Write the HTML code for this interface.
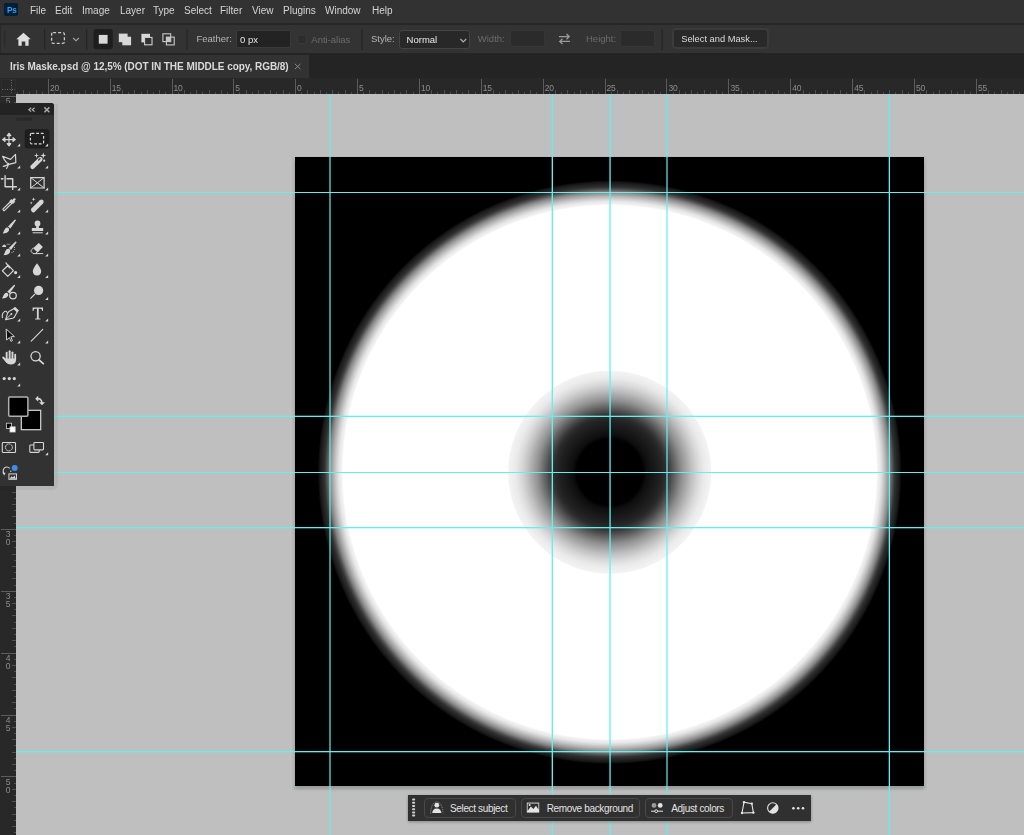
<!DOCTYPE html>
<html><head><meta charset="utf-8">
<style>
*{margin:0;padding:0;box-sizing:border-box}
html,body{width:1024px;height:835px;overflow:hidden;background:#bfbfbf;font-family:"Liberation Sans",sans-serif;position:relative}
.a{position:absolute}
svg{position:absolute;left:0;top:0;overflow:visible}
svg text{stroke:none}
.t{stroke:#505050}
#menubar{left:0;top:0;width:1024px;height:23px;background:#323232}
#sep1{left:0;top:23px;width:1024px;height:2px;background:#262626}
#opts{left:0;top:25px;width:1024px;height:28px;background:#333333;border-left:1px solid #2a2a2a}
#sep2{left:0;top:53px;width:1024px;height:2px;background:#242424}
#tabbar{left:0;top:54px;width:1024px;height:24px;background:#242424}
#tab{left:0;top:55px;width:309px;height:23px;background:#323232}
#rulert{left:0;top:78px;width:1024px;height:16px;background:#282828}
#rulerl{left:0;top:94px;width:16px;height:741px;background:#282828}
#canvas{left:295px;top:158px;width:629px;height:628px;background:#000;box-shadow:0 3px 3px 0px rgba(0,0,0,.17),0 1px 0 3px rgba(0,30,30,.035)}
.menu{position:absolute;top:4px;font-size:10px;color:#d4d4d4;line-height:13px;white-space:nowrap;will-change:transform}
.ot{position:absolute;font-size:9.5px;line-height:12px;color:#b4b4b4;white-space:nowrap}
.dim{color:#6c6c6c}
.sep{position:absolute;width:1px;background:#262626}
.box{position:absolute;background:#262626;border:1px solid #3a3a3a;border-radius:2px}
#tools{left:0;top:103px;width:54px;height:383px;background:#323232;border-top-right-radius:3px;}
#toolhdr{left:0;top:103px;width:54px;height:11.5px;background:#232323;border-top-right-radius:3px}
#task{left:408px;top:795px;width:403px;height:26px;background:#303030;box-shadow:0 1px 3px rgba(0,0,0,.3)}
.tb{position:absolute;top:798px;height:20px;border:1px solid #4a4a4a;border-radius:4px}
.tt{position:absolute;top:803px;font-size:10px;line-height:12px;color:#e2e2e2;white-space:nowrap;letter-spacing:-0.35px}
</style></head><body>
<div id="menubar" class="a"></div>
<div id="sep1" class="a"></div>
<div id="opts" class="a"></div>
<div id="sep2" class="a"></div>
<div id="tabbar" class="a"></div>
<div id="tab" class="a"></div>
<div id="rulert" class="a"></div>
<div id="rulerl" class="a"></div>

<!-- Ps logo -->
<div class="a" style="left:4px;top:3px;width:14px;height:13px;background:#001e36;border-radius:2px"></div>
<div class="a" style="left:6.5px;top:4.7px;font-size:8.2px;font-weight:bold;color:#2ea2f4;line-height:11px;letter-spacing:-0.1px;will-change:transform">Ps</div>

<!-- menu -->
<div class="menu" style="left:30px">File</div>
<div class="menu" style="left:55px">Edit</div>
<div class="menu" style="left:81.5px">Image</div>
<div class="menu" style="left:119.5px">Layer</div>
<div class="menu" style="left:152.5px">Type</div>
<div class="menu" style="left:183.5px">Select</div>
<div class="menu" style="left:219.5px">Filter</div>
<div class="menu" style="left:251.5px">View</div>
<div class="menu" style="left:283px">Plugins</div>
<div class="menu" style="left:324.5px">Window</div>
<div class="menu" style="left:371.5px">Help</div>

<!-- options bar -->
<svg width="1024" height="60">
 <g fill="#2a2a2a"><rect x="4" y="31" width="1.5" height="16"/></g>
 <g fill="#242424">
  <rect x="44" y="29" width="1.2" height="21"/>
  <rect x="86" y="29" width="1.2" height="21"/>
  <rect x="186.5" y="29" width="1.2" height="21"/>
  <rect x="361.5" y="29" width="1.2" height="21"/>
  <rect x="661.5" y="29" width="1.2" height="21"/>
 </g>
 <!-- home -->
 <path d="M23.5 32.8 L30.7 39.3 L28.6 39.3 L28.6 45.7 L25.3 45.7 L25.3 41.5 L21.7 41.5 L21.7 45.7 L18.4 45.7 L18.4 39.3 L16.3 39.3 Z" fill="#dedede"/>
 <!-- marquee -->
 <rect x="51.6" y="32.6" width="12.8" height="10.8" rx="1.5" fill="none" stroke="#c8c8c8" stroke-width="1.3" stroke-dasharray="3 2"/>
 <path d="M73.2 38 L76 40.8 L78.8 38" fill="none" stroke="#a8a8a8" stroke-width="1.1"/>
 <!-- selection modes -->
 <rect x="93.5" y="29" width="19.3" height="20.2" rx="3" fill="#1e1e1e"/>
 <rect x="98.8" y="34.9" width="8.8" height="8.8" fill="#d8d8d8"/>
 <rect x="118.8" y="33.6" width="8.8" height="8.6" fill="#d8d8d8"/>
 <rect x="122.3" y="36.7" width="8.8" height="8.6" fill="#d8d8d8"/>
 <rect x="141.4" y="33.8" width="8.6" height="8.6" fill="#d8d8d8"/>
 <rect x="144.6" y="37.4" width="7.4" height="7.4" fill="#323232" stroke="#d0d0d0" stroke-width="1.1"/>
 <rect x="162.9" y="33.8" width="7.8" height="7.8" fill="none" stroke="#c8c8c8" stroke-width="1.1"/>
 <rect x="166.4" y="37.1" width="7.8" height="7.8" fill="none" stroke="#c8c8c8" stroke-width="1.1"/>
 <rect x="166.4" y="37.1" width="4.3" height="4.5" fill="#c8c8c8"/>
 <!-- checkbox -->
 <rect x="297.5" y="35" width="8.5" height="8.5" rx="1.5" fill="#2c2c2c" stroke="#3a3a3a" stroke-width="1"/>
 <!-- swap -->
 <g fill="none" stroke="#9a9a9a" stroke-width="1.3">
  <path d="M559 36.6 H569 M566.5 34 L569.2 36.6 L566.5 39.2"/>
  <path d="M570 41.4 H560 M562.5 38.8 L559.8 41.4 L562.5 44"/>
 </g>
</svg>
<div class="ot" style="left:196.5px;top:33px">Feather:</div>
<div class="box" style="left:236px;top:29.6px;width:54.5px;height:18.2px;background:#232323"></div>
<div class="ot" style="left:240px;top:33.5px;color:#e4e4e4">0 px</div>
<div class="ot dim" style="left:311.3px;top:33.5px">Anti-alias</div>
<div class="ot" style="left:371px;top:33px">Style:</div>
<div class="box" style="left:399px;top:30.2px;width:71px;height:19.3px;border-radius:3px;background:#282828;border-color:#444"></div>
<div class="ot" style="left:406.6px;top:34px;color:#e8e8e8">Normal</div>
<svg width="1024" height="60"><path d="M460.4 39 L463.3 41.9 L466.2 39" fill="none" stroke="#b0b0b0" stroke-width="1.1"/></svg>
<div class="ot dim" style="left:477.8px;top:33px">Width:</div>
<div class="box" style="left:510.3px;top:29.6px;width:34.5px;height:17.8px;background:#2b2b2b;border-color:#363636"></div>
<div class="ot dim" style="left:586px;top:33px">Height:</div>
<div class="box" style="left:620.4px;top:29.6px;width:34.3px;height:17.8px;background:#2b2b2b;border-color:#363636"></div>
<div class="box" style="left:671.5px;top:27.5px;width:97px;height:21px;border-radius:4px;background:#292929;border:2px solid #3b3b3b"></div>
<div class="ot" style="left:681.2px;top:33px;color:#dcdcdc;font-size:9.3px">Select and Mask...</div>

<!-- tab -->
<div class="a" style="left:9.7px;top:60.5px;font-size:10px;font-weight:bold;line-height:12px;color:#dadada;white-space:nowrap;letter-spacing:-0.05px;will-change:transform">Iris Maske.psd @ 12,5% (DOT IN THE MIDDLE copy, RGB/8)</div>
<svg width="1024" height="80"><path d="M294.8 63.8 L300.5 69.2 M300.5 63.8 L294.8 69.2" stroke="#8e8e8e" stroke-width="0.9"/></svg>

<!-- rulers -->
<svg width="1024" height="835" style="font-size:8.5px;font-family:'Liberation Sans',sans-serif;will-change:transform">
 <g stroke="#5c5c5c" stroke-width="1" fill="#8c8c8c" style="letter-spacing:-0.2px">
<line x1="17.50" y1="92.2" x2="17.50" y2="94" class="t"/>
<line x1="23.50" y1="90.2" x2="23.50" y2="94" class="t"/>
<line x1="29.50" y1="92.2" x2="29.50" y2="94" class="t"/>
<line x1="36.50" y1="90.2" x2="36.50" y2="94" class="t"/>
<line x1="42.50" y1="92.2" x2="42.50" y2="94" class="t"/>
<line x1="48.50" y1="79" x2="48.50" y2="94" />
<text x="50.10" y="90.7">20</text>
<line x1="54.50" y1="92.2" x2="54.50" y2="94" class="t"/>
<line x1="60.50" y1="90.2" x2="60.50" y2="94" class="t"/>
<line x1="67.50" y1="92.2" x2="67.50" y2="94" class="t"/>
<line x1="73.50" y1="90.2" x2="73.50" y2="94" class="t"/>
<line x1="79.50" y1="92.2" x2="79.50" y2="94" class="t"/>
<line x1="85.50" y1="90.2" x2="85.50" y2="94" class="t"/>
<line x1="91.50" y1="92.2" x2="91.50" y2="94" class="t"/>
<line x1="97.50" y1="90.2" x2="97.50" y2="94" class="t"/>
<line x1="104.50" y1="92.2" x2="104.50" y2="94" class="t"/>
<line x1="110.50" y1="79" x2="110.50" y2="94" />
<text x="111.85" y="90.7">15</text>
<line x1="116.50" y1="92.2" x2="116.50" y2="94" class="t"/>
<line x1="122.50" y1="90.2" x2="122.50" y2="94" class="t"/>
<line x1="128.50" y1="92.2" x2="128.50" y2="94" class="t"/>
<line x1="134.50" y1="90.2" x2="134.50" y2="94" class="t"/>
<line x1="141.50" y1="92.2" x2="141.50" y2="94" class="t"/>
<line x1="147.50" y1="90.2" x2="147.50" y2="94" class="t"/>
<line x1="153.50" y1="92.2" x2="153.50" y2="94" class="t"/>
<line x1="159.50" y1="90.2" x2="159.50" y2="94" class="t"/>
<line x1="165.50" y1="92.2" x2="165.50" y2="94" class="t"/>
<line x1="172.50" y1="79" x2="172.50" y2="94" />
<text x="173.60" y="90.7">10</text>
<line x1="178.50" y1="92.2" x2="178.50" y2="94" class="t"/>
<line x1="184.50" y1="90.2" x2="184.50" y2="94" class="t"/>
<line x1="190.50" y1="92.2" x2="190.50" y2="94" class="t"/>
<line x1="196.50" y1="90.2" x2="196.50" y2="94" class="t"/>
<line x1="202.50" y1="92.2" x2="202.50" y2="94" class="t"/>
<line x1="209.50" y1="90.2" x2="209.50" y2="94" class="t"/>
<line x1="215.50" y1="92.2" x2="215.50" y2="94" class="t"/>
<line x1="221.50" y1="90.2" x2="221.50" y2="94" class="t"/>
<line x1="227.50" y1="92.2" x2="227.50" y2="94" class="t"/>
<line x1="233.50" y1="79" x2="233.50" y2="94" />
<text x="235.35" y="90.7">5</text>
<line x1="239.50" y1="92.2" x2="239.50" y2="94" class="t"/>
<line x1="246.50" y1="90.2" x2="246.50" y2="94" class="t"/>
<line x1="252.50" y1="92.2" x2="252.50" y2="94" class="t"/>
<line x1="258.50" y1="90.2" x2="258.50" y2="94" class="t"/>
<line x1="264.50" y1="92.2" x2="264.50" y2="94" class="t"/>
<line x1="270.50" y1="90.2" x2="270.50" y2="94" class="t"/>
<line x1="276.50" y1="92.2" x2="276.50" y2="94" class="t"/>
<line x1="283.50" y1="90.2" x2="283.50" y2="94" class="t"/>
<line x1="289.50" y1="92.2" x2="289.50" y2="94" class="t"/>
<line x1="295.50" y1="79" x2="295.50" y2="94" />
<text x="297.10" y="90.7">0</text>
<line x1="301.50" y1="92.2" x2="301.50" y2="94" class="t"/>
<line x1="307.50" y1="90.2" x2="307.50" y2="94" class="t"/>
<line x1="314.50" y1="92.2" x2="314.50" y2="94" class="t"/>
<line x1="320.50" y1="90.2" x2="320.50" y2="94" class="t"/>
<line x1="326.50" y1="92.2" x2="326.50" y2="94" class="t"/>
<line x1="332.50" y1="90.2" x2="332.50" y2="94" class="t"/>
<line x1="338.50" y1="92.2" x2="338.50" y2="94" class="t"/>
<line x1="345.50" y1="90.2" x2="345.50" y2="94" class="t"/>
<line x1="351.50" y1="92.2" x2="351.50" y2="94" class="t"/>
<line x1="357.50" y1="79" x2="357.50" y2="94" />
<text x="359.00" y="90.7">5</text>
<line x1="363.50" y1="92.2" x2="363.50" y2="94" class="t"/>
<line x1="369.50" y1="90.2" x2="369.50" y2="94" class="t"/>
<line x1="375.50" y1="92.2" x2="375.50" y2="94" class="t"/>
<line x1="382.50" y1="90.2" x2="382.50" y2="94" class="t"/>
<line x1="388.50" y1="92.2" x2="388.50" y2="94" class="t"/>
<line x1="394.50" y1="90.2" x2="394.50" y2="94" class="t"/>
<line x1="400.50" y1="92.2" x2="400.50" y2="94" class="t"/>
<line x1="406.50" y1="90.2" x2="406.50" y2="94" class="t"/>
<line x1="413.50" y1="92.2" x2="413.50" y2="94" class="t"/>
<line x1="419.50" y1="79" x2="419.50" y2="94" />
<text x="420.90" y="90.7">10</text>
<line x1="425.50" y1="92.2" x2="425.50" y2="94" class="t"/>
<line x1="431.50" y1="90.2" x2="431.50" y2="94" class="t"/>
<line x1="437.50" y1="92.2" x2="437.50" y2="94" class="t"/>
<line x1="444.50" y1="90.2" x2="444.50" y2="94" class="t"/>
<line x1="450.50" y1="92.2" x2="450.50" y2="94" class="t"/>
<line x1="456.50" y1="90.2" x2="456.50" y2="94" class="t"/>
<line x1="462.50" y1="92.2" x2="462.50" y2="94" class="t"/>
<line x1="468.50" y1="90.2" x2="468.50" y2="94" class="t"/>
<line x1="475.50" y1="92.2" x2="475.50" y2="94" class="t"/>
<line x1="481.50" y1="79" x2="481.50" y2="94" />
<text x="482.80" y="90.7">15</text>
<line x1="487.50" y1="92.2" x2="487.50" y2="94" class="t"/>
<line x1="493.50" y1="90.2" x2="493.50" y2="94" class="t"/>
<line x1="499.50" y1="92.2" x2="499.50" y2="94" class="t"/>
<line x1="505.50" y1="90.2" x2="505.50" y2="94" class="t"/>
<line x1="512.50" y1="92.2" x2="512.50" y2="94" class="t"/>
<line x1="518.50" y1="90.2" x2="518.50" y2="94" class="t"/>
<line x1="524.50" y1="92.2" x2="524.50" y2="94" class="t"/>
<line x1="530.50" y1="90.2" x2="530.50" y2="94" class="t"/>
<line x1="536.50" y1="92.2" x2="536.50" y2="94" class="t"/>
<line x1="543.50" y1="79" x2="543.50" y2="94" />
<text x="544.70" y="90.7">20</text>
<line x1="549.50" y1="92.2" x2="549.50" y2="94" class="t"/>
<line x1="555.50" y1="90.2" x2="555.50" y2="94" class="t"/>
<line x1="561.50" y1="92.2" x2="561.50" y2="94" class="t"/>
<line x1="567.50" y1="90.2" x2="567.50" y2="94" class="t"/>
<line x1="574.50" y1="92.2" x2="574.50" y2="94" class="t"/>
<line x1="580.50" y1="90.2" x2="580.50" y2="94" class="t"/>
<line x1="586.50" y1="92.2" x2="586.50" y2="94" class="t"/>
<line x1="592.50" y1="90.2" x2="592.50" y2="94" class="t"/>
<line x1="598.50" y1="92.2" x2="598.50" y2="94" class="t"/>
<line x1="605.50" y1="79" x2="605.50" y2="94" />
<text x="606.60" y="90.7">25</text>
<line x1="611.50" y1="92.2" x2="611.50" y2="94" class="t"/>
<line x1="617.50" y1="90.2" x2="617.50" y2="94" class="t"/>
<line x1="623.50" y1="92.2" x2="623.50" y2="94" class="t"/>
<line x1="629.50" y1="90.2" x2="629.50" y2="94" class="t"/>
<line x1="635.50" y1="92.2" x2="635.50" y2="94" class="t"/>
<line x1="642.50" y1="90.2" x2="642.50" y2="94" class="t"/>
<line x1="648.50" y1="92.2" x2="648.50" y2="94" class="t"/>
<line x1="654.50" y1="90.2" x2="654.50" y2="94" class="t"/>
<line x1="660.50" y1="92.2" x2="660.50" y2="94" class="t"/>
<line x1="666.50" y1="79" x2="666.50" y2="94" />
<text x="668.50" y="90.7">30</text>
<line x1="673.50" y1="92.2" x2="673.50" y2="94" class="t"/>
<line x1="679.50" y1="90.2" x2="679.50" y2="94" class="t"/>
<line x1="685.50" y1="92.2" x2="685.50" y2="94" class="t"/>
<line x1="691.50" y1="90.2" x2="691.50" y2="94" class="t"/>
<line x1="697.50" y1="92.2" x2="697.50" y2="94" class="t"/>
<line x1="704.50" y1="90.2" x2="704.50" y2="94" class="t"/>
<line x1="710.50" y1="92.2" x2="710.50" y2="94" class="t"/>
<line x1="716.50" y1="90.2" x2="716.50" y2="94" class="t"/>
<line x1="722.50" y1="92.2" x2="722.50" y2="94" class="t"/>
<line x1="728.50" y1="79" x2="728.50" y2="94" />
<text x="730.40" y="90.7">35</text>
<line x1="734.50" y1="92.2" x2="734.50" y2="94" class="t"/>
<line x1="741.50" y1="90.2" x2="741.50" y2="94" class="t"/>
<line x1="747.50" y1="92.2" x2="747.50" y2="94" class="t"/>
<line x1="753.50" y1="90.2" x2="753.50" y2="94" class="t"/>
<line x1="759.50" y1="92.2" x2="759.50" y2="94" class="t"/>
<line x1="765.50" y1="90.2" x2="765.50" y2="94" class="t"/>
<line x1="772.50" y1="92.2" x2="772.50" y2="94" class="t"/>
<line x1="778.50" y1="90.2" x2="778.50" y2="94" class="t"/>
<line x1="784.50" y1="92.2" x2="784.50" y2="94" class="t"/>
<line x1="790.50" y1="79" x2="790.50" y2="94" />
<text x="792.30" y="90.7">40</text>
<line x1="796.50" y1="92.2" x2="796.50" y2="94" class="t"/>
<line x1="803.50" y1="90.2" x2="803.50" y2="94" class="t"/>
<line x1="809.50" y1="92.2" x2="809.50" y2="94" class="t"/>
<line x1="815.50" y1="90.2" x2="815.50" y2="94" class="t"/>
<line x1="821.50" y1="92.2" x2="821.50" y2="94" class="t"/>
<line x1="827.50" y1="90.2" x2="827.50" y2="94" class="t"/>
<line x1="834.50" y1="92.2" x2="834.50" y2="94" class="t"/>
<line x1="840.50" y1="90.2" x2="840.50" y2="94" class="t"/>
<line x1="846.50" y1="92.2" x2="846.50" y2="94" class="t"/>
<line x1="852.50" y1="79" x2="852.50" y2="94" />
<text x="854.20" y="90.7">45</text>
<line x1="858.50" y1="92.2" x2="858.50" y2="94" class="t"/>
<line x1="864.50" y1="90.2" x2="864.50" y2="94" class="t"/>
<line x1="871.50" y1="92.2" x2="871.50" y2="94" class="t"/>
<line x1="877.50" y1="90.2" x2="877.50" y2="94" class="t"/>
<line x1="883.50" y1="92.2" x2="883.50" y2="94" class="t"/>
<line x1="889.50" y1="90.2" x2="889.50" y2="94" class="t"/>
<line x1="895.50" y1="92.2" x2="895.50" y2="94" class="t"/>
<line x1="902.50" y1="90.2" x2="902.50" y2="94" class="t"/>
<line x1="908.50" y1="92.2" x2="908.50" y2="94" class="t"/>
<line x1="914.50" y1="79" x2="914.50" y2="94" />
<text x="916.10" y="90.7">50</text>
<line x1="920.50" y1="92.2" x2="920.50" y2="94" class="t"/>
<line x1="926.50" y1="90.2" x2="926.50" y2="94" class="t"/>
<line x1="933.50" y1="92.2" x2="933.50" y2="94" class="t"/>
<line x1="939.50" y1="90.2" x2="939.50" y2="94" class="t"/>
<line x1="945.50" y1="92.2" x2="945.50" y2="94" class="t"/>
<line x1="951.50" y1="90.2" x2="951.50" y2="94" class="t"/>
<line x1="957.50" y1="92.2" x2="957.50" y2="94" class="t"/>
<line x1="964.50" y1="90.2" x2="964.50" y2="94" class="t"/>
<line x1="970.50" y1="92.2" x2="970.50" y2="94" class="t"/>
<line x1="976.50" y1="79" x2="976.50" y2="94" />
<text x="978.00" y="90.7">55</text>
<line x1="982.50" y1="92.2" x2="982.50" y2="94" class="t"/>
<line x1="988.50" y1="90.2" x2="988.50" y2="94" class="t"/>
<line x1="994.50" y1="92.2" x2="994.50" y2="94" class="t"/>
<line x1="1001.50" y1="90.2" x2="1001.50" y2="94" class="t"/>
<line x1="1007.50" y1="92.2" x2="1007.50" y2="94" class="t"/>
<line x1="1013.50" y1="90.2" x2="1013.50" y2="94" class="t"/>
<line x1="1019.50" y1="92.2" x2="1019.50" y2="94" class="t"/>
 </g>
 <g stroke="#5c5c5c" stroke-width="1" fill="#8c8c8c">
<line x1="1" y1="96.50" x2="16" y2="96.50" />
<text x="5.8" y="104.10">5</text>
<line x1="14" y1="102.50" x2="16" y2="102.50" class="t"/>
<line x1="12" y1="108.50" x2="16" y2="108.50" class="t"/>
<line x1="14" y1="114.50" x2="16" y2="114.50" class="t"/>
<line x1="12" y1="120.50" x2="16" y2="120.50" class="t"/>
<line x1="14" y1="126.50" x2="16" y2="126.50" class="t"/>
<line x1="12" y1="133.50" x2="16" y2="133.50" class="t"/>
<line x1="14" y1="139.50" x2="16" y2="139.50" class="t"/>
<line x1="12" y1="145.50" x2="16" y2="145.50" class="t"/>
<line x1="14" y1="151.50" x2="16" y2="151.50" class="t"/>
<line x1="1" y1="157.50" x2="16" y2="157.50" />
<text x="5.8" y="166.00">0</text>
<line x1="14" y1="164.50" x2="16" y2="164.50" class="t"/>
<line x1="12" y1="170.50" x2="16" y2="170.50" class="t"/>
<line x1="14" y1="176.50" x2="16" y2="176.50" class="t"/>
<line x1="12" y1="182.50" x2="16" y2="182.50" class="t"/>
<line x1="14" y1="188.50" x2="16" y2="188.50" class="t"/>
<line x1="12" y1="195.50" x2="16" y2="195.50" class="t"/>
<line x1="14" y1="201.50" x2="16" y2="201.50" class="t"/>
<line x1="12" y1="207.50" x2="16" y2="207.50" class="t"/>
<line x1="14" y1="213.50" x2="16" y2="213.50" class="t"/>
<line x1="1" y1="219.50" x2="16" y2="219.50" />
<text x="5.8" y="227.90">5</text>
<line x1="14" y1="225.50" x2="16" y2="225.50" class="t"/>
<line x1="12" y1="232.50" x2="16" y2="232.50" class="t"/>
<line x1="14" y1="238.50" x2="16" y2="238.50" class="t"/>
<line x1="12" y1="244.50" x2="16" y2="244.50" class="t"/>
<line x1="14" y1="250.50" x2="16" y2="250.50" class="t"/>
<line x1="12" y1="256.50" x2="16" y2="256.50" class="t"/>
<line x1="14" y1="263.50" x2="16" y2="263.50" class="t"/>
<line x1="12" y1="269.50" x2="16" y2="269.50" class="t"/>
<line x1="14" y1="275.50" x2="16" y2="275.50" class="t"/>
<line x1="1" y1="281.50" x2="16" y2="281.50" />
<text x="5.8" y="289.80">1</text>
<text x="5.8" y="297.70">0</text>
<line x1="14" y1="287.50" x2="16" y2="287.50" class="t"/>
<line x1="12" y1="294.50" x2="16" y2="294.50" class="t"/>
<line x1="14" y1="300.50" x2="16" y2="300.50" class="t"/>
<line x1="12" y1="306.50" x2="16" y2="306.50" class="t"/>
<line x1="14" y1="312.50" x2="16" y2="312.50" class="t"/>
<line x1="12" y1="318.50" x2="16" y2="318.50" class="t"/>
<line x1="14" y1="325.50" x2="16" y2="325.50" class="t"/>
<line x1="12" y1="331.50" x2="16" y2="331.50" class="t"/>
<line x1="14" y1="337.50" x2="16" y2="337.50" class="t"/>
<line x1="1" y1="343.50" x2="16" y2="343.50" />
<text x="5.8" y="351.70">1</text>
<text x="5.8" y="359.60">5</text>
<line x1="14" y1="349.50" x2="16" y2="349.50" class="t"/>
<line x1="12" y1="355.50" x2="16" y2="355.50" class="t"/>
<line x1="14" y1="362.50" x2="16" y2="362.50" class="t"/>
<line x1="12" y1="368.50" x2="16" y2="368.50" class="t"/>
<line x1="14" y1="374.50" x2="16" y2="374.50" class="t"/>
<line x1="12" y1="380.50" x2="16" y2="380.50" class="t"/>
<line x1="14" y1="386.50" x2="16" y2="386.50" class="t"/>
<line x1="12" y1="393.50" x2="16" y2="393.50" class="t"/>
<line x1="14" y1="399.50" x2="16" y2="399.50" class="t"/>
<line x1="1" y1="405.50" x2="16" y2="405.50" />
<text x="5.8" y="413.60">2</text>
<text x="5.8" y="421.50">0</text>
<line x1="14" y1="411.50" x2="16" y2="411.50" class="t"/>
<line x1="12" y1="417.50" x2="16" y2="417.50" class="t"/>
<line x1="14" y1="424.50" x2="16" y2="424.50" class="t"/>
<line x1="12" y1="430.50" x2="16" y2="430.50" class="t"/>
<line x1="14" y1="436.50" x2="16" y2="436.50" class="t"/>
<line x1="12" y1="442.50" x2="16" y2="442.50" class="t"/>
<line x1="14" y1="448.50" x2="16" y2="448.50" class="t"/>
<line x1="12" y1="455.50" x2="16" y2="455.50" class="t"/>
<line x1="14" y1="461.50" x2="16" y2="461.50" class="t"/>
<line x1="1" y1="467.50" x2="16" y2="467.50" />
<text x="5.8" y="475.50">2</text>
<text x="5.8" y="483.40">5</text>
<line x1="14" y1="473.50" x2="16" y2="473.50" class="t"/>
<line x1="12" y1="479.50" x2="16" y2="479.50" class="t"/>
<line x1="14" y1="485.50" x2="16" y2="485.50" class="t"/>
<line x1="12" y1="492.50" x2="16" y2="492.50" class="t"/>
<line x1="14" y1="498.50" x2="16" y2="498.50" class="t"/>
<line x1="12" y1="504.50" x2="16" y2="504.50" class="t"/>
<line x1="14" y1="510.50" x2="16" y2="510.50" class="t"/>
<line x1="12" y1="516.50" x2="16" y2="516.50" class="t"/>
<line x1="14" y1="523.50" x2="16" y2="523.50" class="t"/>
<line x1="1" y1="529.50" x2="16" y2="529.50" />
<text x="5.8" y="537.40">3</text>
<text x="5.8" y="545.30">0</text>
<line x1="14" y1="535.50" x2="16" y2="535.50" class="t"/>
<line x1="12" y1="541.50" x2="16" y2="541.50" class="t"/>
<line x1="14" y1="547.50" x2="16" y2="547.50" class="t"/>
<line x1="12" y1="554.50" x2="16" y2="554.50" class="t"/>
<line x1="14" y1="560.50" x2="16" y2="560.50" class="t"/>
<line x1="12" y1="566.50" x2="16" y2="566.50" class="t"/>
<line x1="14" y1="572.50" x2="16" y2="572.50" class="t"/>
<line x1="12" y1="578.50" x2="16" y2="578.50" class="t"/>
<line x1="14" y1="585.50" x2="16" y2="585.50" class="t"/>
<line x1="1" y1="591.50" x2="16" y2="591.50" />
<text x="5.8" y="599.30">3</text>
<text x="5.8" y="607.20">5</text>
<line x1="14" y1="597.50" x2="16" y2="597.50" class="t"/>
<line x1="12" y1="603.50" x2="16" y2="603.50" class="t"/>
<line x1="14" y1="609.50" x2="16" y2="609.50" class="t"/>
<line x1="12" y1="615.50" x2="16" y2="615.50" class="t"/>
<line x1="14" y1="622.50" x2="16" y2="622.50" class="t"/>
<line x1="12" y1="628.50" x2="16" y2="628.50" class="t"/>
<line x1="14" y1="634.50" x2="16" y2="634.50" class="t"/>
<line x1="12" y1="640.50" x2="16" y2="640.50" class="t"/>
<line x1="14" y1="646.50" x2="16" y2="646.50" class="t"/>
<line x1="1" y1="653.50" x2="16" y2="653.50" />
<text x="5.8" y="661.20">4</text>
<text x="5.8" y="669.10">0</text>
<line x1="14" y1="659.50" x2="16" y2="659.50" class="t"/>
<line x1="12" y1="665.50" x2="16" y2="665.50" class="t"/>
<line x1="14" y1="671.50" x2="16" y2="671.50" class="t"/>
<line x1="12" y1="677.50" x2="16" y2="677.50" class="t"/>
<line x1="14" y1="684.50" x2="16" y2="684.50" class="t"/>
<line x1="12" y1="690.50" x2="16" y2="690.50" class="t"/>
<line x1="14" y1="696.50" x2="16" y2="696.50" class="t"/>
<line x1="12" y1="702.50" x2="16" y2="702.50" class="t"/>
<line x1="14" y1="708.50" x2="16" y2="708.50" class="t"/>
<line x1="1" y1="715.50" x2="16" y2="715.50" />
<text x="5.8" y="723.10">4</text>
<text x="5.8" y="731.00">5</text>
<line x1="14" y1="721.50" x2="16" y2="721.50" class="t"/>
<line x1="12" y1="727.50" x2="16" y2="727.50" class="t"/>
<line x1="14" y1="733.50" x2="16" y2="733.50" class="t"/>
<line x1="12" y1="739.50" x2="16" y2="739.50" class="t"/>
<line x1="14" y1="745.50" x2="16" y2="745.50" class="t"/>
<line x1="12" y1="752.50" x2="16" y2="752.50" class="t"/>
<line x1="14" y1="758.50" x2="16" y2="758.50" class="t"/>
<line x1="12" y1="764.50" x2="16" y2="764.50" class="t"/>
<line x1="14" y1="770.50" x2="16" y2="770.50" class="t"/>
<line x1="1" y1="776.50" x2="16" y2="776.50" />
<text x="5.8" y="785.00">5</text>
<text x="5.8" y="792.90">0</text>
<line x1="14" y1="783.50" x2="16" y2="783.50" class="t"/>
<line x1="12" y1="789.50" x2="16" y2="789.50" class="t"/>
<line x1="14" y1="795.50" x2="16" y2="795.50" class="t"/>
<line x1="12" y1="801.50" x2="16" y2="801.50" class="t"/>
<line x1="14" y1="807.50" x2="16" y2="807.50" class="t"/>
<line x1="12" y1="814.50" x2="16" y2="814.50" class="t"/>
<line x1="14" y1="820.50" x2="16" y2="820.50" class="t"/>
<line x1="12" y1="826.50" x2="16" y2="826.50" class="t"/>
<line x1="14" y1="832.50" x2="16" y2="832.50" class="t"/>
 </g>
 <!-- corner -->
 <rect x="1.5" y="79.5" width="14" height="14" fill="none" stroke="#2e2e2e" stroke-width="1"/>
 <g stroke="#6e6e6e" stroke-width="1" stroke-dasharray="1 1.5">
  <line x1="11.5" y1="80" x2="11.5" y2="93"/>
  <line x1="2" y1="89.5" x2="15" y2="89.5"/>
 </g>
</svg>

<!-- pasteboard -->
<div class="a" style="left:16px;top:94px;width:1008px;height:741px;background:#bfbfbf"></div>

<!-- canvas -->
<div class="a" style="left:295px;top:157px;width:629px;height:1px;background:rgba(0,0,0,.5)"></div>
<div id="canvas" class="a">
<svg width="629" height="628" viewBox="295 158 629 628">
<defs>
<radialGradient id="g1" gradientUnits="userSpaceOnUse" cx="609.7" cy="472.2" r="300">
<stop offset="0.889" stop-color="#fff"/>
<stop offset="0.895" stop-color="#f0f0f0"/>
<stop offset="0.902" stop-color="#e8e8e8"/>
<stop offset="0.911" stop-color="#d0d0d0"/>
<stop offset="0.921" stop-color="#b0b0b0"/>
<stop offset="0.930" stop-color="#909090"/>
<stop offset="0.934" stop-color="#808080"/>
<stop offset="0.943" stop-color="#505050"/>
<stop offset="0.951" stop-color="#303030"/>
<stop offset="0.961" stop-color="#202020"/>
<stop offset="0.967" stop-color="#151515"/>
<stop offset="0.973" stop-color="#000"/>
</radialGradient>
<radialGradient id="g2" gradientUnits="userSpaceOnUse" cx="609.7" cy="472.2" r="102">
<stop offset="0" stop-color="#000"/>
<stop offset="0.324" stop-color="#000"/>
<stop offset="0.363" stop-color="#0e0e0e"/>
<stop offset="0.431" stop-color="#181818"/>
<stop offset="0.49" stop-color="#202020"/>
<stop offset="0.539" stop-color="#2a2a2a"/>
<stop offset="0.569" stop-color="#383838"/>
<stop offset="0.608" stop-color="#505050"/>
<stop offset="0.657" stop-color="#707070"/>
<stop offset="0.706" stop-color="#909090"/>
<stop offset="0.755" stop-color="#a8a8a8"/>
<stop offset="0.804" stop-color="#c0c0c0"/>
<stop offset="0.863" stop-color="#d8d8d8"/>
<stop offset="0.922" stop-color="#eaeaea"/>
<stop offset="0.99" stop-color="#f3f3f3"/>
<stop offset="1" stop-color="#fff"/>
</radialGradient>
</defs>
<rect x="295" y="157" width="629" height="629" fill="url(#g1)"/>
<circle cx="609.7" cy="472.2" r="102" fill="url(#g2)"/>
</svg>
</div>

<!-- guides -->
<svg width="1024" height="835">
<g fill="#66eeee">
<rect x="329" y="94" width="1" height="741" opacity="0.6"/><rect x="330" y="94" width="1" height="741" opacity="0.6"/><rect x="551" y="94" width="1" height="741" opacity="0.35"/><rect x="552" y="94" width="1" height="741" opacity="1"/><rect x="609" y="94" width="1" height="741" opacity="0.6"/><rect x="610" y="94" width="1" height="741" opacity="0.7"/><rect x="666" y="94" width="1" height="741" opacity="0.6"/><rect x="667" y="94" width="1" height="741" opacity="0.6"/><rect x="888" y="94" width="1" height="741" opacity="0.3"/><rect x="889" y="94" width="1" height="741" opacity="1"/>
<rect x="16" y="192" width="1008" height="1" opacity="1"/><rect x="16" y="415" width="1008" height="1" opacity="0.3"/><rect x="16" y="416" width="1008" height="1" opacity="1"/><rect x="16" y="472" width="1008" height="1" opacity="1"/><rect x="16" y="527" width="1008" height="1" opacity="1"/><rect x="16" y="528" width="1008" height="1" opacity="0.3"/><rect x="16" y="751" width="1008" height="1" opacity="1"/><rect x="16" y="752" width="1008" height="1" opacity="0.3"/>
</g>
</svg>

<!-- tools panel -->
<div class="a" style="left:0;top:104px;width:58px;height:386px;border-radius:0 0 5px 0;background:rgba(0,20,20,0.055)"></div>
<div id="tools" class="a"></div>
<div id="toolhdr" class="a"></div>

<svg width="60" height="500">
 <!-- header -->
 <g fill="none" stroke="#b4b4b4" stroke-width="1.1">
  <path d="M31.2 107.8 L28.8 109.7 L31.2 111.6 M34.6 107.8 L32.2 109.7 L34.6 111.6"/>
  <path d="M44.4 107.4 L49.4 112.2 M49.4 107.4 L44.4 112.2" stroke-width="1.5" stroke="#a8a8a8"/>
 </g>
 <g fill="#272727">
  <rect x="16.2" y="117.6" width="15.8" height="3"/>
 </g>
 <g fill="#2f2f2f"><rect x="17" y="118.4" width="1" height="1.4"/><rect x="20" y="118.4" width="1" height="1.4"/><rect x="23" y="118.4" width="1" height="1.4"/><rect x="26" y="118.4" width="1" height="1.4"/><rect x="29" y="118.4" width="1" height="1.4"/></g>
 <!-- selected marquee bg -->
 <rect x="24.7" y="128.9" width="24.7" height="19.5" rx="3" fill="#1e1e1e"/>
 <g fill="#d6d6d6" stroke="none">
 <path d="M20.2 143.6 L20.2 146.6 L17.2 146.6 Z"/><path d="M48.1 143.6 L48.1 146.6 L45.1 146.6 Z"/><path d="M20.2 165.6 L20.2 168.6 L17.2 168.6 Z"/><path d="M48.1 165.6 L48.1 168.6 L45.1 168.6 Z"/><path d="M20.2 187.6 L20.2 190.6 L17.2 190.6 Z"/><path d="M48.1 187.6 L48.1 190.6 L45.1 190.6 Z"/><path d="M20.2 209.6 L20.2 212.6 L17.2 212.6 Z"/><path d="M48.1 209.6 L48.1 212.6 L45.1 212.6 Z"/><path d="M20.2 231.6 L20.2 234.6 L17.2 234.6 Z"/><path d="M48.1 231.6 L48.1 234.6 L45.1 234.6 Z"/><path d="M20.2 253.6 L20.2 256.6 L17.2 256.6 Z"/><path d="M48.1 253.6 L48.1 256.6 L45.1 256.6 Z"/><path d="M20.2 275.1 L20.2 278.1 L17.2 278.1 Z"/><path d="M48.1 275.1 L48.1 278.1 L45.1 278.1 Z"/><path d="M48.1 297.1 L48.1 300.1 L45.1 300.1 Z"/><path d="M20.2 318.6 L20.2 321.6 L17.2 321.6 Z"/><path d="M48.1 318.6 L48.1 321.6 L45.1 321.6 Z"/><path d="M20.2 340.6 L20.2 343.6 L17.2 343.6 Z"/><path d="M48.1 340.6 L48.1 343.6 L45.1 343.6 Z"/><path d="M20.2 362.6 L20.2 365.6 L17.2 365.6 Z"/><path d="M20.2 383.6 L20.2 386.6 L17.2 386.6 Z"/><path d="M48.1 452.2 L48.1 455.2 L45.1 455.2 Z"/>
 </g>
 <g fill="none" stroke="#d6d6d6" stroke-width="1.2" stroke-linejoin="round" stroke-linecap="round">
  <!-- move -->
  <path d="M3.5 139.6 H14.4 M9 134.2 V145" />
  <path d="M9 133.3 L7.2 135.6 H10.8 Z M9 145.9 L7.2 143.6 H10.8 Z M2.6 139.6 L4.9 137.8 V141.4 Z M15.3 139.6 L13 137.8 V141.4 Z" fill="#d6d6d6"/>
  <!-- marquee -->
  <rect x="30.4" y="133.4" width="13.2" height="10.4" rx="1.2" stroke-dasharray="2.8 1.8" stroke-linecap="butt"/>
  <!-- lasso -->
  <path d="M2.6 156.3 L10.6 159.4 L15.5 154.4 L15.8 162.6 L9 164.3 Q5 162 2.6 156.3 Z"/>
  <path d="M8.6 163.5 Q7.5 165.5 3.2 166.4 M8.6 163.5 Q8.2 166.5 6.6 168.3"/>
  <!-- crop -->
  <path d="M1.4 178.8 H3 M5.1 175.6 V186.8 H14.6 M7 178.8 H12.7 V189.4 M14.6 186.8 H16.4" stroke-width="1.4"/>
  <!-- frame -->
  <rect x="30.7" y="177.6" width="13.4" height="10.4"/>
  <path d="M30.7 177.6 L44.1 188 M44.1 177.6 L30.7 188" stroke-width="1"/>
  <!-- eyedropper -->
  <path d="M3.6 210.6 L2.9 209.2 L10.1 202 L11.6 203.5 L4.4 210.7 Z"/>
  <!-- stamp -->
  <circle cx="37.5" cy="223.4" r="2.3" fill="#d6d6d6"/>
  <path d="M33 232.8 H42.4" stroke-width="1"/>
  <!-- eraser line -->
  <path d="M35 253.6 H42.8" stroke-width="1"/>
  <!-- bucket -->
  <path d="M2.4 270.8 L8.2 265.2 L13.4 270.6 L7.8 276.4 Z"/>
  <path d="M6 262.8 L9.5 267.8" />
  <!-- sponge circle -->
  <circle cx="13" cy="295.6" r="3.3"/>
  <!-- zoom -->
  <circle cx="35.6" cy="356.2" r="4.6" stroke-width="1.3"/>
  <path d="M39 359.8 L43.3 363.6" stroke-width="1.8"/>
  <!-- line -->
  <path d="M31.2 341.2 L42.8 329.4" stroke-width="1.1"/>
  <!-- pen -->
  <path d="M2.4 317.6 Q1.6 313.4 4.4 311.6 Q6.2 310.6 7 312.4" stroke-width="1.1"/>
  <path d="M5.6 319.6 L7.6 313.2 Q8.4 311.2 10.6 310.4 L14.2 308.4 L17.4 311.6 L15.4 315.2 Q14.6 317.4 12.6 318.2 Z" stroke-width="1.1"/>
  <path d="M5.8 319.4 L11.2 314.2" stroke-width="0.9"/>
  <!-- quick mask -->
  <rect x="2.3" y="442.5" width="13.2" height="10" rx="0.8" stroke-width="1.1"/>
  <circle cx="8.9" cy="447.4" r="3.5" stroke-dasharray="1.1 1.2" stroke-width="1"/>
  <!-- screen mode -->
  <rect x="29.8" y="445" width="9.4" height="7.4" rx="0.8" stroke-width="1.1"/>
  <rect x="33.9" y="442.5" width="9.6" height="7.4" rx="0.8" fill="#323232" stroke-width="1.1"/>
 </g>
 <g fill="#d6d6d6" stroke="none">
  <!-- magic wand -->
  <path d="M30.8 165.6 L38.8 157.6 Q40.6 156.2 42 157.6 Q43.4 159.2 42 160.8 L34 168.6 Q32.4 169.8 31 168.6 Q29.6 167 30.8 165.6 Z"/><path d="M38.6 160 L40 158.6" stroke="#333" stroke-width="1.2" stroke-linecap="round"/>
  <path d="M36.5 152.8 L37.1 154.9 L39.2 155.5 L37.1 156.1 L36.5 158.2 L35.9 156.1 L33.8 155.5 L35.9 154.9 Z"/>
  <path d="M43.3 152.6 L44 154.8 L46.2 155.5 L44 156.2 L43.3 158.4 L42.6 156.2 L40.4 155.5 L42.6 154.8 Z"/>
  <circle cx="44.2" cy="160.7" r="1.1"/>
  <circle cx="2" cy="178.8" r="0.8"/>
  <!-- eyedropper head -->
  <path d="M9.2 201.3 L11.4 199.1 L12.2 199.9 L13.6 198.5 Q15.4 197.8 15.8 199.6 L14.4 201 L15.2 201.8 L13 204 Z"/>
  <!-- healing -->
  <path d="M31.8 211.8 Q30.2 210.2 31.4 208.6 L39.8 200.2 Q41.6 198.8 43.2 200.4 Q44.4 202 43 203.6 L34.6 212 Q33.2 213.2 31.8 211.8 Z"/>
  <path d="M33.6 197.2 L34.1 198.7 L35.6 199.2 L34.1 199.7 L33.6 201.2 L33.1 199.7 L31.6 199.2 L33.1 198.7 Z"/>
  <path d="M31.2 201.4 L31.6 202.5 L32.7 202.9 L31.6 203.3 L31.2 204.4 L30.8 203.3 L29.7 202.9 L30.8 202.5 Z"/>
  <!-- brush -->
  <path d="M14.9 219.6 Q15.9 219.8 15.8 220.6 L10.4 228.6 L8 226.6 Z"/>
  <path d="M7.8 227.6 Q9.6 228.4 9 230.4 Q7.6 233.2 2.8 233.4 Q4 231.4 4.6 229.6 Q5.8 227.2 7.8 227.6 Z"/>
  <!-- stamp body -->
  <path d="M36.3 225.6 H38.7 L38.9 228 H42.6 Q43.2 228 43.2 228.6 V231 H31.8 V228.6 Q31.8 228 32.4 228 H36.1 Z"/>
  <!-- history brush -->
  <path d="M15.5 241.4 Q16.5 241.6 16.4 242.4 L11 250 L8.8 248 Z"/>
  <path d="M8.8 248.8 Q10.8 249.8 9.8 252.4 Q8.4 255 3.6 255.2 Q4.8 252.8 5.4 251 Q6.6 248.4 8.8 248.8 Z"/>
  <path d="M2 247 Q2.6 244.4 4.4 244.4 Q6 244.4 6.2 247 Z"/>
  <rect x="6.6" y="243.8" width="3.6" height="0.8" opacity=".7"/>
  <circle cx="14.4" cy="247.4" r=".5"/><circle cx="14.6" cy="249.6" r=".5"/><circle cx="13.6" cy="251.4" r=".5"/><circle cx="12" cy="252.4" r=".5"/>
  <!-- eraser -->
  <path d="M38.2 243.4 Q38.8 242.8 39.4 243.4 L42.4 246.4 Q43 247 42.4 247.6 L37.6 252.4 L33.2 248.2 Z"/>
  <path d="M33.4 248 L31.2 250.2 Q30.6 250.8 31.2 251.6 L33 253.6 H35.4 L37.8 251.2" fill="none" stroke="#d6d6d6" stroke-width="1"/>
  <!-- bucket drip -->
  <circle cx="15.6" cy="272.6" r="1.6"/>
  <!-- blur drop -->
  <path d="M37 263.2 Q40.8 268.2 41.2 271 Q41.2 275.2 37 275.6 Q32.8 275.2 32.8 271 Q33.2 268.2 37 263.2 Z"/>
  <!-- sponge brush -->
  <path d="M14.1 284.8 Q15.1 285 15 285.8 L9.6 293.6 L7.2 291.8 Z"/>
  <path d="M7 292.8 Q8.8 293.6 8.2 295.6 Q6.8 298.4 2 298.6 Q3.2 296.6 3.8 294.8 Q5 292.4 7 292.8 Z"/>
  <!-- dodge -->
  <circle cx="38.6" cy="290.4" r="4.6"/>
  <path d="M34.6 293.6 L35.4 294.4 L30.8 299 L30 298.2 Z"/>
  <!-- type -->
  <path d="M32.6 307.6 H43 V311 H42.2 Q41.8 308.8 40.6 308.8 H38.7 V318.6 H40.4 V319.6 H35.2 V318.6 H36.9 V308.8 H35 Q33.8 308.8 33.4 311 H32.6 Z"/>
  <!-- path selection arrow -->
  <path d="M6.2 329 L14.4 336.6 L10.8 336.8 L12.4 340.6 L11 341.4 L9.4 337.6 L6.6 340 Z" stroke="#d6d6d6" stroke-width="1" stroke-linejoin="round" fill="#111"/>
  <!-- hand -->
  <rect x="5.7" y="351.8" width="1.9" height="8" rx="0.95"/>
  <rect x="8.7" y="350.2" width="1.9" height="9" rx="0.95"/>
  <rect x="11.5" y="351.4" width="1.9" height="8" rx="0.95"/>
  <rect x="14.3" y="353.8" width="1.8" height="6" rx="0.9"/>
  <path d="M5.6 358.4 H16.1 V359.6 Q16 364.6 10.6 364.6 Q7.4 364.6 5.6 361.8 Z"/>
  <path d="M3.3 357.6 L7.2 362" stroke="#d6d6d6" stroke-width="2.1" stroke-linecap="round"/>
  <path d="M13.2 308.8 L15 306.8 L19 310.6 L17.2 312.6 Z"/>
  <circle cx="11.4" cy="314" r="0.9"/>
  <!-- dots -->
  <circle cx="4.2" cy="378.6" r="1.6"/><circle cx="9.3" cy="378.6" r="1.6"/><circle cx="14.3" cy="378.6" r="1.6"/>
  <!-- default colors -->
  <rect x="6" y="422.8" width="6" height="6" fill="#d6d6d6"/>
  <rect x="6.8" y="423.6" width="4.4" height="4.4" fill="#000"/>
  <rect x="9.6" y="426.4" width="6" height="6" fill="#d6d6d6"/>
  <rect x="10.4" y="427.2" width="4.4" height="4.4" fill="#fff"/>
  <!-- bottom icon -->
  <path d="M9.8 468.4 Q7.4 466.2 4.8 467.6 Q2.4 469.4 3.6 473.2" fill="none" stroke="#d6d6d6" stroke-width="1.1"/>
  <path d="M2.4 472.6 L5.6 472.8 L4.2 475.6 Z"/>
  <circle cx="10.8" cy="471.3" r=".7"/>
  <rect x="8.9" y="473.9" width="7.6" height="5.4" fill="none" stroke="#d6d6d6" stroke-width="1"/>
  <path d="M9.6 478.8 L11.6 476.2 L13 477.4 L14.4 475.6 L15.9 478.8 Z"/>
  <circle cx="14.7" cy="468.1" r="3" fill="#3b8ef0"/>
 </g>
 <!-- color swatches -->
 <path d="M36.4 398.8 Q41.6 397.6 42 403.2" fill="none" stroke="#d6d6d6" stroke-width="1.6"/>
 <path d="M35.2 398.8 L38.2 395.8 V401.8 Z M42 405.2 L39 402.2 H45 Z" fill="#d6d6d6"/>
 <rect x="21.3" y="410.3" width="19.4" height="19.4" fill="#000" stroke="#d8d8d8" stroke-width="1.2"/>
 <rect x="8.7" y="397" width="19.2" height="19.2" rx="1.2" fill="#000" stroke="#b0b0b0" stroke-width="1.5"/>
</svg>


<!-- task bar -->
<div id="task" class="a"></div>

<div class="tb" style="left:424.4px;width:91.6px"></div><div class="tb" style="left:521.2px;width:118.6px"></div><div class="tb" style="left:645.3px;width:87.3px"></div>
<div class="tt" style="left:450px">Select subject</div>
<div class="tt" style="left:546.7px">Remove background</div>
<div class="tt" style="left:671.3px">Adjust colors</div>
<svg width="1024" height="835">
 <g fill="#d0d0d0">
  <rect x="412" y="798.6" width="3.2" height="2" rx="1"/><rect x="412" y="801.8" width="3.2" height="2" rx="1"/><rect x="412" y="805" width="3.2" height="2" rx="1"/>
  <rect x="412" y="808.2" width="3.2" height="2" rx="1"/><rect x="412" y="811.4" width="3.2" height="2" rx="1"/><rect x="412" y="814.6" width="3.2" height="2" rx="1"/>
 </g>
 <g fill="#e4e4e4">
  <!-- person -->
  <circle cx="436.8" cy="805.2" r="2.4"/>
  <path d="M432.2 813 Q432.6 808.6 436.8 808.4 Q441 808.6 441.4 813 Z"/>
  <path d="M430.6 813.4 Q431 803 436.8 801.8 Q442.6 803 443 813.4" fill="none" stroke="#bdbdbd" stroke-width=".7" stroke-dasharray="1 1"/>
  <!-- image -->
  <rect x="526.8" y="802.6" width="12.4" height="10" />
  <path d="M527.6 811 L530.8 806.6 L533.4 809 L536 805.8 L538.4 809.4 V803.4 H527.6 Z" fill="#303030"/>
  <circle cx="529.6" cy="805" r="1" fill="#e4e4e4"/>
  <!-- adjust -->
  <circle cx="654" cy="805.4" r="2.4" fill="#9a9a9a"/>
  <circle cx="660.2" cy="805.4" r="2.4"/>
  <path d="M651 811.2 H663" stroke="#e4e4e4" stroke-width="1" fill="none"/>
  <circle cx="656.2" cy="811.2" r="1.4" fill="#303030" stroke="#e4e4e4" stroke-width="1"/>
  <!-- perspective -->
  <path d="M742 813 L744 802.2 L751.8 803.6 L753.4 812.6 Z" fill="none" stroke="#e4e4e4" stroke-width="1.1"/>
  <circle cx="742" cy="813" r="1.2"/><circle cx="744" cy="802.2" r="1.2"/><circle cx="751.8" cy="803.6" r="1.2"/><circle cx="753.4" cy="812.6" r="1.2"/>
  <!-- half circle -->
  <circle cx="772.8" cy="808" r="5.2" fill="none" stroke="#e4e4e4" stroke-width="1.1"/>
  <path d="M776.5 804.3 A5.2 5.2 0 0 1 769.1 811.7 Z"/>
  <!-- more -->
  <circle cx="793.4" cy="808.2" r="1.3"/><circle cx="798.2" cy="808.2" r="1.3"/><circle cx="803" cy="808.2" r="1.3"/>
 </g>
</svg>

</body></html>
